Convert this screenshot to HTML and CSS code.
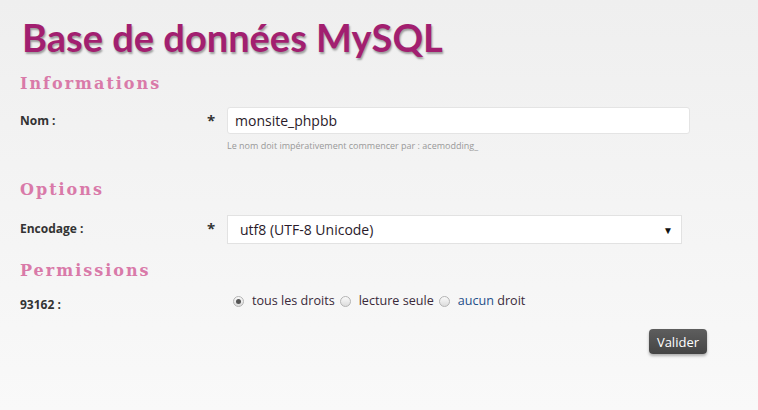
FILE: index.html
```html
<!DOCTYPE html>
<html lang="fr">
<head>
    <meta charset="UTF-8">
    <title>Base de données MySQL</title>
    <link rel="stylesheet" href="styles.css">
</head>
<body>
    <div class="page">
        <h1 class="page-title">Base de données MySQL</h1>

        <form class="db-form" onsubmit="return false;">
            <h2 class="section-title">Informations</h2>
            <div class="form-row">
                <label class="form-label" for="dbName">Nom :</label>
                <span class="required">*</span>
                <div class="form-field">
                    <input type="text" id="dbName" class="input-field" value="monsite_phpbb">
                    <div class="field-hint">Le nom doit impérativement commencer par : acemodding_</div>
                </div>
            </div>

            <h2 class="section-title section-options">Options</h2>
            <div class="form-row encoding-row">
                <label class="form-label" for="encoding">Encodage :</label>
                <span class="required">*</span>
                <div class="form-field">
                    <div class="select-box">
                        <span>utf8 (UTF-8 Unicode)</span>
                        <span class="select-arrow">&#9660;</span>
                    </div>
                </div>
            </div>

            <h2 class="section-title section-perms">Permissions</h2>
            <div class="form-row perm-row">
                <span class="form-label">93162 :</span>
                <span class="required"></span>
                <div class="form-field radio-group">
                    <label class="radio-option"><span class="radio checked"></span>tous les droits</label>
                    <label class="radio-option"><span class="radio"></span>lecture seule</label>
                    <label class="radio-option"><span class="radio"></span><span class="accent">aucun</span>&nbsp;droit</label>
                </div>
            </div>

            <div class="form-actions">
                <button class="button-submit">Valider</button>
            </div>
        </form>
    </div>
</body>
</html>
```

FILE: styles.css
```css
/* General Styling */
html, body {
    margin: 0;
    height: 100%;
}

body {
    font-family: "Open Sans", Arial, sans-serif;
    background: linear-gradient(to bottom, #efefef, #f9f9f9);
    color: #333;
}

.page {
    padding: 12px 0 0 20px;
    width: 690px;
}

.page-title {
    margin: 0 0 0 2px;
    font-family: Lato, "Noto Sans", sans-serif;
    font-weight: bold;
    font-size: 38px;
    line-height: 50px;
    color: #a21f70;
    text-shadow: 1px 2px 2px rgba(0, 0, 0, 0.35);
}

.section-title {
    margin: 11px 0 0 0;
    font-family: "DejaVu Serif", Georgia, serif;
    font-weight: bold;
    font-size: 16px;
    letter-spacing: 2px;
    line-height: 22px;
    color: #d97aa9;
}

.section-options {
    margin-top: 27px;
}

.section-perms {
    margin-top: 16px;
}

.form-row {
    display: grid;
    grid-template-columns: 187px 20px 1fr;
    align-items: start;
    margin-top: 12px;
}

.encoding-row {
    margin-top: 14px;
}

.form-label {
    font-size: 12px;
    font-weight: bold;
    color: #333;
    line-height: 27px;
}

.required {
    font-size: 15px;
    font-weight: bold;
    color: #333;
    line-height: 27px;
}

.input-field {
    display: block;
    width: 463px;
    height: 27px;
    box-sizing: border-box;
    padding: 0 7px;
    border: 1px solid #e4e4e4;
    border-radius: 3px;
    background: #fff;
    font-family: "Open Sans", Arial, sans-serif;
    font-size: 14px;
    color: #2a1a2a;
}

.field-hint {
    margin-top: 5px;
    font-size: 9px;
    color: #999;
}

.select-box {
    display: flex;
    justify-content: space-between;
    align-items: center;
    width: 455px;
    height: 29px;
    box-sizing: border-box;
    padding: 0 8px 0 12px;
    border: 1px solid #e2e2e2;
    background: #fff;
    font-size: 14px;
    color: #2a1a2a;
}

.select-arrow {
    font-size: 10px;
    color: #111;
}

.perm-row {
    margin-top: 9px;
}

.radio-group {
    display: flex;
    align-items: center;
    padding-left: 6px;
    line-height: 20px;
}

.radio-option {
    display: flex;
    align-items: center;
    font-size: 12.6px;
    color: #3a2a3a;
    margin-right: 5px;
}

.radio {
    width: 11px;
    height: 11px;
    box-sizing: border-box;
    border: 1px solid #b4b4b4;
    border-radius: 50%;
    background: linear-gradient(to bottom, #fafafa, #dcdcdc);
    margin-right: 8px;
    position: relative;
}

.radio.checked::after {
    content: "";
    position: absolute;
    left: 2px;
    top: 2px;
    width: 5px;
    height: 5px;
    border-radius: 50%;
    background: #555;
}

.accent {
    color: #1f4f8a;
}

.form-actions {
    display: flex;
    justify-content: flex-end;
    width: 687px;
    margin-top: 11px;
}

.button-submit {
    padding: 0 8px;
    height: 25px;
    border: none;
    border-radius: 4px;
    background: linear-gradient(to bottom, #5e5e5e, #444);
    color: #fff;
    font-family: "Open Sans", Arial, sans-serif;
    font-size: 13px;
    box-shadow: 0 2px 3px rgba(0, 0, 0, 0.3);
    cursor: pointer;
}
```
